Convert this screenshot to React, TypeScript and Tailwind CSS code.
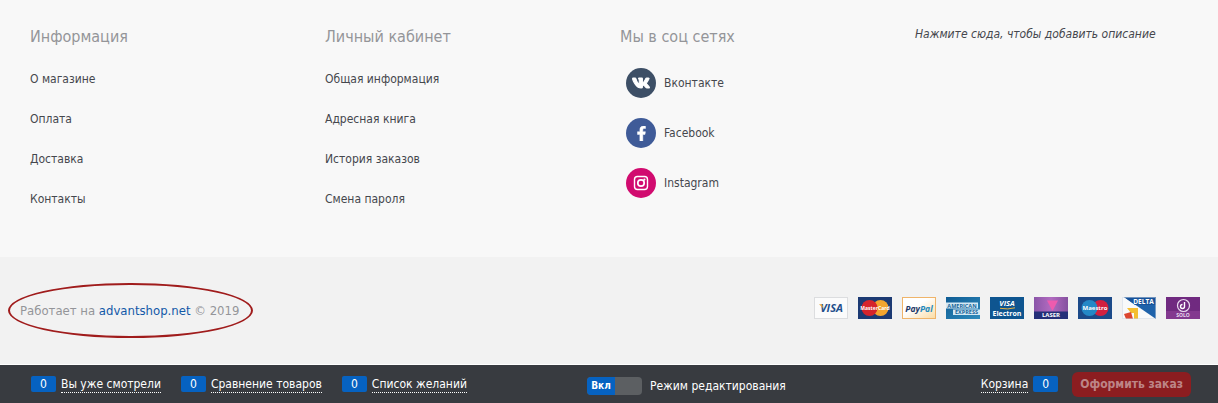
import type { ReactNode } from 'react';
import { FaFacebookF, FaVk } from 'react-icons/fa';

const infoLinks = ['О магазине', 'Оплата', 'Доставка', 'Контакты'];
const accountLinks = ['Общая информация', 'Адресная книга', 'История заказов', 'Смена пароля'];

function InstagramIcon() {
  return (
    <svg width="16" height="16" viewBox="0 0 16 16" fill="none" stroke="currentColor" aria-hidden="true">
      <rect x="1.5" y="1.5" width="13" height="13" rx="3" strokeWidth="1.4" />
      <circle cx="8" cy="8" r="3.2" strokeWidth="1.7" />
      <circle cx="11.4" cy="4.6" r="1.1" fill="currentColor" stroke="none" />
    </svg>
  );
}

const socials = [
  { name: 'Вконтакте', color: 'bg-[#3d4f66]', icon: <FaVk size={18} stroke="currentColor" strokeWidth={34} /> },
  { name: 'Facebook', color: 'bg-[#3f5b98]', icon: <FaFacebookF size={15} stroke="currentColor" strokeWidth={16} /> },
  { name: 'Instagram', color: 'bg-[#d10b6f]', icon: <InstagramIcon /> },
];

function LinkColumn({ title, links }: { title: string; links: string[] }) {
  return (
    <div className="px-2.5 pt-6">
      <h2 className="text-[16px] leading-6 text-[#949599]">{title}</h2>
      <ul className="mt-5 flex flex-col gap-5">
        {links.map((link) => (
          <li key={link} className="h-5 leading-5">
            <a href="#" className="hover:underline">{link}</a>
          </li>
        ))}
      </ul>
    </div>
  );
}

function Card({ label, children }: { label: string; children: ReactNode }) {
  return (
    <svg width="34" height="22" viewBox="0 0 34 22" role="img" aria-label={label} fontFamily="'Open Sans', sans-serif" fontWeight="700">
      {children}
    </svg>
  );
}

function Payments() {
  return (
    <div className="mb-1.5 flex items-center gap-2.5">
      <Card label="Visa">
        <rect x=".5" y=".5" width="33" height="21" fill="#fbfbfb" stroke="#dcdddf" />
        <text x="17.5" y="15" textAnchor="middle" fontSize="11" fontStyle="italic" fill="#1f4f8c">VISA</text>
        <path d="M5 7.2h3l1.4 4z" fill="#e5a33a" />
      </Card>
      <Card label="MasterCard">
        <rect width="34" height="22" fill="#1c3a73" />
        <circle cx="22.5" cy="11" r="8" fill="#f3a52f" />
        <circle cx="11.5" cy="11" r="8" fill="#d5242b" />
        <text x="17" y="13" textAnchor="middle" fontSize="5" fill="#fff">MasterCard</text>
      </Card>
      <Card label="PayPal">
        <defs>
          <linearGradient id="paypal" x1="0" y1="0" x2="1" y2="1">
            <stop offset="0.4" stopColor="#fff" />
            <stop offset="1" stopColor="#fbdca4" />
          </linearGradient>
        </defs>
        <rect x=".5" y=".5" width="33" height="21" fill="url(#paypal)" stroke="#efb46a" />
        <text x="17" y="14.5" textAnchor="middle" fontSize="8.5" fontStyle="italic" fill="#1c3768">
          Pay<tspan fill="#2589bd">Pal</tspan>
        </text>
      </Card>
      <Card label="American Express">
        <defs>
          <linearGradient id="amex" x1="0" y1="0" x2="1" y2="1">
            <stop offset="0" stopColor="#0f5c94" />
            <stop offset="1" stopColor="#2f8bbd" />
          </linearGradient>
        </defs>
        <rect width="34" height="22" fill="url(#amex)" />
        <path d="M0 5.5h32v6H0zM7 12.5h27v5.5H7z" fill="#d3e8f3" />
        <text x="16" y="10.6" textAnchor="middle" fontSize="5.5" fill="#17659a">AMERICAN</text>
        <text x="20.5" y="17.2" textAnchor="middle" fontSize="5.5" fill="#17659a">EXPRESS</text>
      </Card>
      <Card label="Visa Electron">
        <rect width="34" height="22" fill="#0e5590" />
        <text x="17" y="9" textAnchor="middle" fontSize="7.5" fontStyle="italic" fill="#fff">VISA</text>
        <path d="M10 11.3q8 1.5 15-.5" fill="none" stroke="#e6b23f" />
        <text x="17" y="18.6" textAnchor="middle" fontSize="7" fill="#fff">Electron</text>
      </Card>
      <Card label="Laser">
        <defs>
          <linearGradient id="laser" x1="0" y1="0" x2="1" y2="0">
            <stop offset="0" stopColor="#8a55a8" />
            <stop offset="0.5" stopColor="#b26bc0" />
            <stop offset="1" stopColor="#85509f" />
          </linearGradient>
        </defs>
        <rect width="34" height="15" fill="url(#laser)" />
        <path d="M13 3.5h11L18.5 14z" fill="#ee5bae" />
        <rect y="14.5" width="34" height="7.5" fill="#252f78" />
        <text x="17" y="20.4" textAnchor="middle" fontSize="6" fill="#fff">LASER</text>
      </Card>
      <Card label="Maestro">
        <rect width="34" height="22" fill="#1c4a89" />
        <circle cx="22.5" cy="11" r="8" fill="#d3203f" />
        <circle cx="11.5" cy="11" r="8" fill="#2488c6" />
        <text x="17" y="13.3" textAnchor="middle" fontSize="6" fill="#fff">Maestro</text>
      </Card>
      <Card label="Delta">
        <rect width="34" height="22" fill="#f8f9fa" />
        <path d="M2 0h32v22z" fill="#1e62aa" />
        <path d="M2 0h32v8H13z" fill="#17529a" />
        <path d="M5 11h11v11h-4v-6H9z" fill="#f4be30" />
        <path d="M2 17l7-2 2 7H4z" fill="#dc4630" />
        <rect x=".5" y=".5" width="33" height="21" fill="none" stroke="#c9d3df" strokeOpacity=".5" />
        <text x="21.5" y="7" textAnchor="middle" fontSize="6.5" fill="#fff">DELTA</text>
      </Card>
      <Card label="Solo">
        <rect width="34" height="22" fill="#702a80" />
        <rect y="14" width="34" height="8" fill="#83388f" />
        <circle cx="17.5" cy="8.5" r="6" fill="none" stroke="#eadcf0" strokeWidth="1.2" />
        <path d="M18.5 5v4.5a2 2 0 1 1-2-2" fill="none" stroke="#fff" strokeWidth="1.4" />
        <text x="17" y="20.3" textAnchor="middle" fontSize="5" fill="#eadcf0">SOLO</text>
      </Card>
    </div>
  );
}

function Counter() {
  return <span className="h-4 w-[25px] rounded-xs bg-[#0662c1] text-center leading-4">0</span>;
}

function BarLink({ children }: { children: ReactNode }) {
  return <span className="border-b border-dotted border-white leading-4">{children}</span>;
}

export default function App() {
  return (
    <div className="bg-[#f8f8f8] font-['DejaVu_Sans_Condensed','DejaVu_Sans',sans-serif] text-[12px] text-[#45474d]">
      <footer>
        <div className="grid grid-cols-4 pt-px pr-[18px] pb-12 pl-5">
          <LinkColumn title="Информация" links={infoLinks} />
          <LinkColumn title="Личный кабинет" links={accountLinks} />
          <div className="px-2.5 pt-6">
            <h2 className="text-[16px] leading-6 text-[#949599]">Мы в соц сетях</h2>
            <ul className="mt-[19px] flex flex-col gap-5 pl-1.5">
              {socials.map(({ name, color, icon }) => (
                <li key={name}>
                  <a href="#" className="flex items-center gap-2 hover:underline">
                    <span className={`flex size-[30px] items-center justify-center rounded-full text-white ${color}`}>
                      {icon}
                    </span>
                    {name}
                  </a>
                </li>
              ))}
            </ul>
          </div>
          <p className="px-2.5 pt-[23px] leading-5 italic">Нажмите сюда, чтобы добавить описание</p>
        </div>

        <div className="flex h-[108px] items-center justify-between border-b border-white bg-[#f2f2f2] pr-[18px] pl-5">
          <p className="relative text-[13px] text-[#949599]">
            Работает на <a href="#" className="text-[#1259a8]">advantshop.net</a> © 2019
            {/* highlight around the copyright */}
            <span className="pointer-events-none absolute -inset-y-[18px] -right-3.5 -left-3 rounded-[50%] border-2 border-[#a01c1c]" />
          </p>
          <Payments />
        </div>
      </footer>

      {/* Toolbar */}
      <div className="flex h-[38px] items-center bg-[#383b40] pr-[27px] pl-[31px] text-white">
        <nav className="flex gap-5">
          <a href="#" className="flex gap-[5px]"><Counter /><BarLink>Вы уже смотрели</BarLink></a>
          <a href="#" className="flex gap-[5px]"><Counter /><BarLink>Сравнение товаров</BarLink></a>
          <a href="#" className="flex gap-[5px]"><Counter /><BarLink>Список желаний</BarLink></a>
        </nav>
        <div className="ml-[120px] flex items-center gap-2 pt-1">
          <button
            type="button"
            role="switch"
            aria-checked="true"
            aria-labelledby="edit-mode"
            className="flex h-[18px] w-[55px] overflow-hidden rounded-sm bg-[#5c5f62] text-[10px] leading-[18px] font-bold"
          >
            <span className="w-7 bg-[#0662c1]">Вкл</span>
          </button>
          <span id="edit-mode">Режим редактирования</span>
        </div>
        <div className="ml-auto flex items-center gap-3.5">
          <a href="#" className="flex gap-[5px]"><BarLink>Корзина</BarLink><Counter /></a>
          <button type="button" className="h-[25px] rounded-md bg-[#8c1d20] px-2 font-bold text-[#bd8587]">
            Оформить заказ
          </button>
        </div>
      </div>
    </div>
  );
}
